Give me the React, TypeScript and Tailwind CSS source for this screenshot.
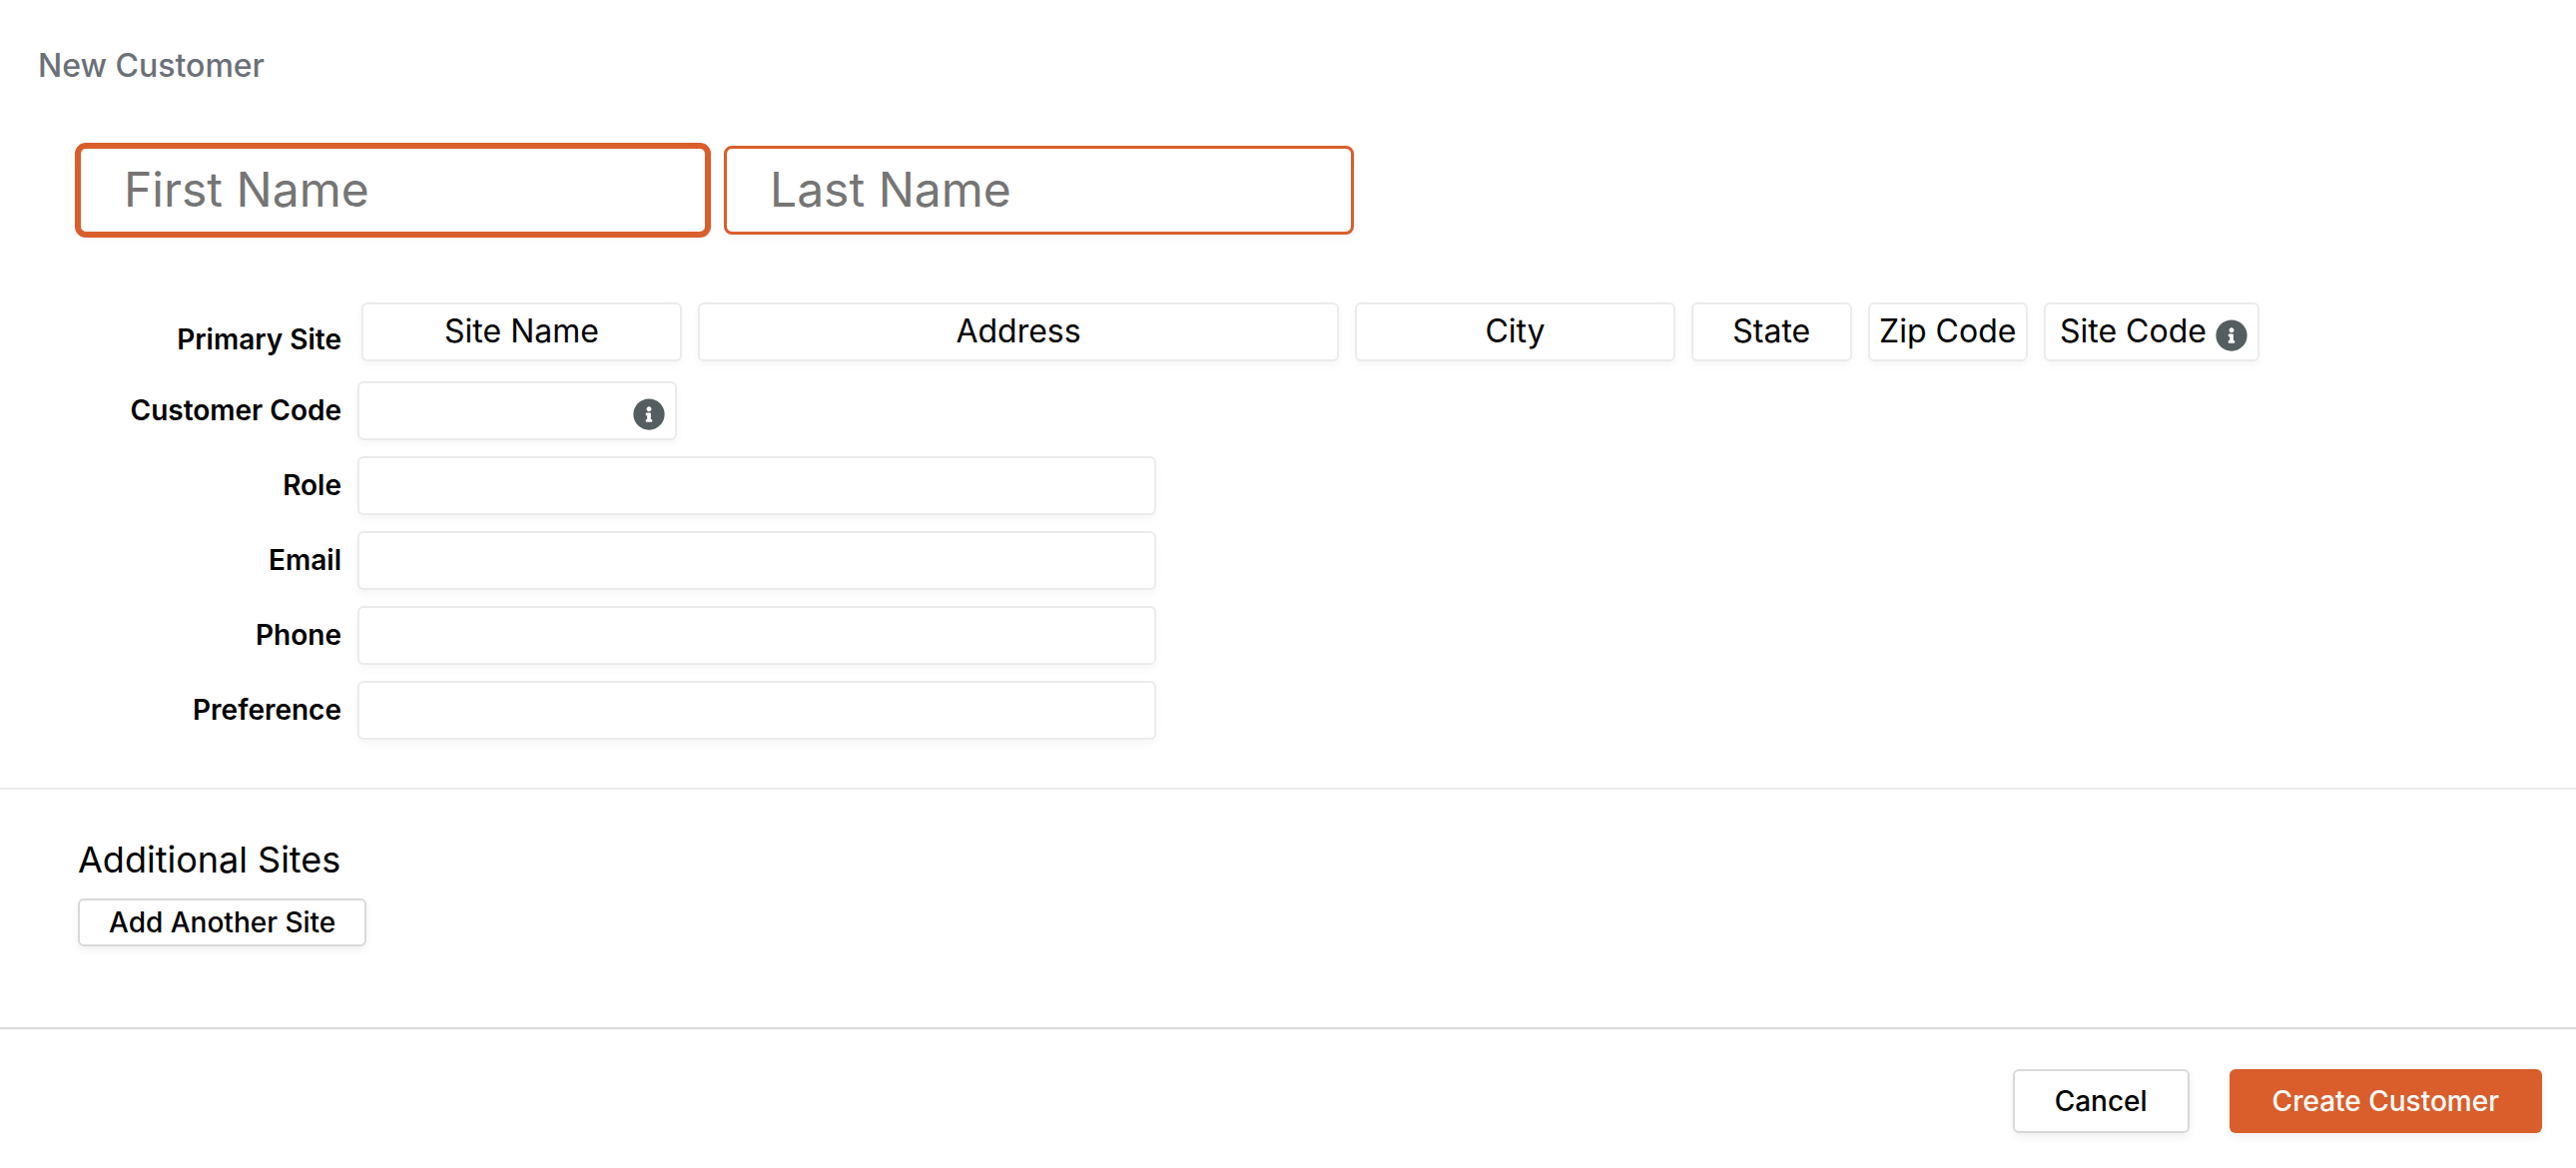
import { useEffect, useRef, type ReactNode } from "react";

const field =
  "h-[59px] rounded-md border-2 border-[#ebebeb] bg-white pb-[2px] text-[32px] text-black shadow-[0_4px_8px_rgba(0,0,0,0.04)] outline-none placeholder:text-black placeholder:opacity-100";

const nameField =
  "h-[89px] min-w-0 grow rounded-lg border-[3px] border-[#d95e2b] bg-white px-[43px] pb-[2px] text-[48px] text-black shadow-[0_4px_8px_rgba(0,0,0,0.04)] outline-none placeholder:text-[#757575] focus:ring-[3px] focus:ring-[#d95e2b]";

const outlineButton =
  "rounded-md border-2 border-[#d9d9d9] bg-white text-[28px] font-medium text-black shadow-[0_4px_8px_rgba(0,0,0,0.06)]";

const contactFields = [
  { id: "role", label: "Role", type: "text" },
  { id: "email", label: "Email", type: "email" },
  { id: "phone", label: "Phone", type: "tel" },
  { id: "preference", label: "Preference", type: "text" },
];

function Row({ id, label, children }: { id: string; label: string; children: ReactNode }) {
  return (
    <div className="flex items-center gap-4">
      <label htmlFor={id} className="w-[264px] shrink-0 pb-[2px] text-right text-[28px] leading-9 font-semibold">
        {label}
      </label>
      {children}
    </div>
  );
}

function InfoButton({ label }: { label: string }) {
  return (
    <button type="button" aria-label={label} className="absolute right-3 bottom-[10px]">
      <svg viewBox="0 0 512 512" className="size-8" aria-hidden="true">
        <circle cx="256" cy="256" r="250" fill="#545e61" />
        <path
          fill="#fff"
          transform="translate(256 256) scale(0.93) translate(-256 -243)"
          d="M256 110c23.196 0 42 18.804 42 42s-18.804 42-42 42-42-18.804-42-42 18.804-42 42-42zm56 254c0 6.627-5.373 12-12 12h-88c-6.627 0-12-5.373-12-12v-24c0-6.627 5.373-12 12-12h12v-64h-12c-6.627 0-12-5.373-12-12v-24c0-6.627 5.373-12 12-12h64c6.627 0 12 5.373 12 12v100h12c6.627 0 12 5.373 12 12v24z"
        />
      </svg>
    </button>
  );
}

export default function App() {
  const firstName = useRef<HTMLInputElement>(null);

  useEffect(() => {
    firstName.current?.focus();
  }, []);

  return (
    <form
      className="flex min-h-screen flex-col bg-white font-['Inter',sans-serif] text-black caret-transparent"
      onSubmit={(event) => event.preventDefault()}
    >
      <section className="border-b-2 border-[#ebebeb] px-[78px] pb-12">
        <h1 className="-ml-10 pt-[46px] text-[32px] leading-10 font-medium text-[#6b7078]">New Customer</h1>

        <div className="mt-[60px] flex w-full max-w-[1278px] gap-4">
          <input ref={firstName} aria-label="First Name" placeholder="First Name" className={nameField} />
          <input aria-label="Last Name" placeholder="Last Name" className={nameField} />
        </div>

        <div className="mt-[68px] flex flex-col gap-4">
          <div className="mb-1 flex max-w-[2185px] gap-5">
            <label
              htmlFor="site-name"
              className="mt-[19px] w-[264px] shrink-0 text-right text-[28px] leading-9 font-semibold"
            >
              Primary Site
            </label>
            <div className="grid grow grid-cols-[2fr_4fr_2fr_1fr_1fr_216px] gap-4">
              <input id="site-name" placeholder="Site Name" className={`${field} min-w-0 text-center`} />
              <input aria-label="Address" placeholder="Address" className={`${field} min-w-0 text-center`} />
              <input aria-label="City" placeholder="City" className={`${field} min-w-0 text-center`} />
              <input aria-label="State" placeholder="State" className={`${field} min-w-0 text-center`} />
              <input aria-label="Zip Code" placeholder="Zip Code" className={`${field} min-w-0 text-center`} />
              <div className="relative">
                <input aria-label="Site Code" placeholder="Site Code" className={`${field} w-full pl-[14px]`} />
                <InfoButton label="About site code" />
              </div>
            </div>
          </div>

          <Row id="customer-code" label="Customer Code">
            <div className="relative w-full max-w-[320px]">
              <input id="customer-code" className={`${field} w-full px-4`} />
              <InfoButton label="About customer code" />
            </div>
          </Row>

          {contactFields.map(({ id, label, type }) => (
            <Row key={id} id={id} label={label}>
              <input id={id} type={type} className={`${field} w-full max-w-[800px] px-4`} />
            </Row>
          ))}
        </div>
      </section>

      <section className="px-[78px] pt-[47px] pb-[81px]">
        <h2 className="text-[36px] leading-[46px]">Additional Sites</h2>
        <button type="button" className={`${outlineButton} mt-4 h-12 px-[29px] leading-none`}>
          Add Another Site
        </button>
      </section>

      <footer className="flex justify-end gap-10 border-t-2 border-[#d9d9d9] px-[34px] py-10">
        <button type="button" className={`${outlineButton} h-16 px-10`}>
          Cancel
        </button>
        <button
          type="submit"
          className="h-16 rounded-md bg-[#d95e2b] px-[43px] text-[28px] font-medium text-white shadow-[0_4px_8px_rgba(0,0,0,0.06)]"
        >
          Create Customer
        </button>
      </footer>
    </form>
  );
}
